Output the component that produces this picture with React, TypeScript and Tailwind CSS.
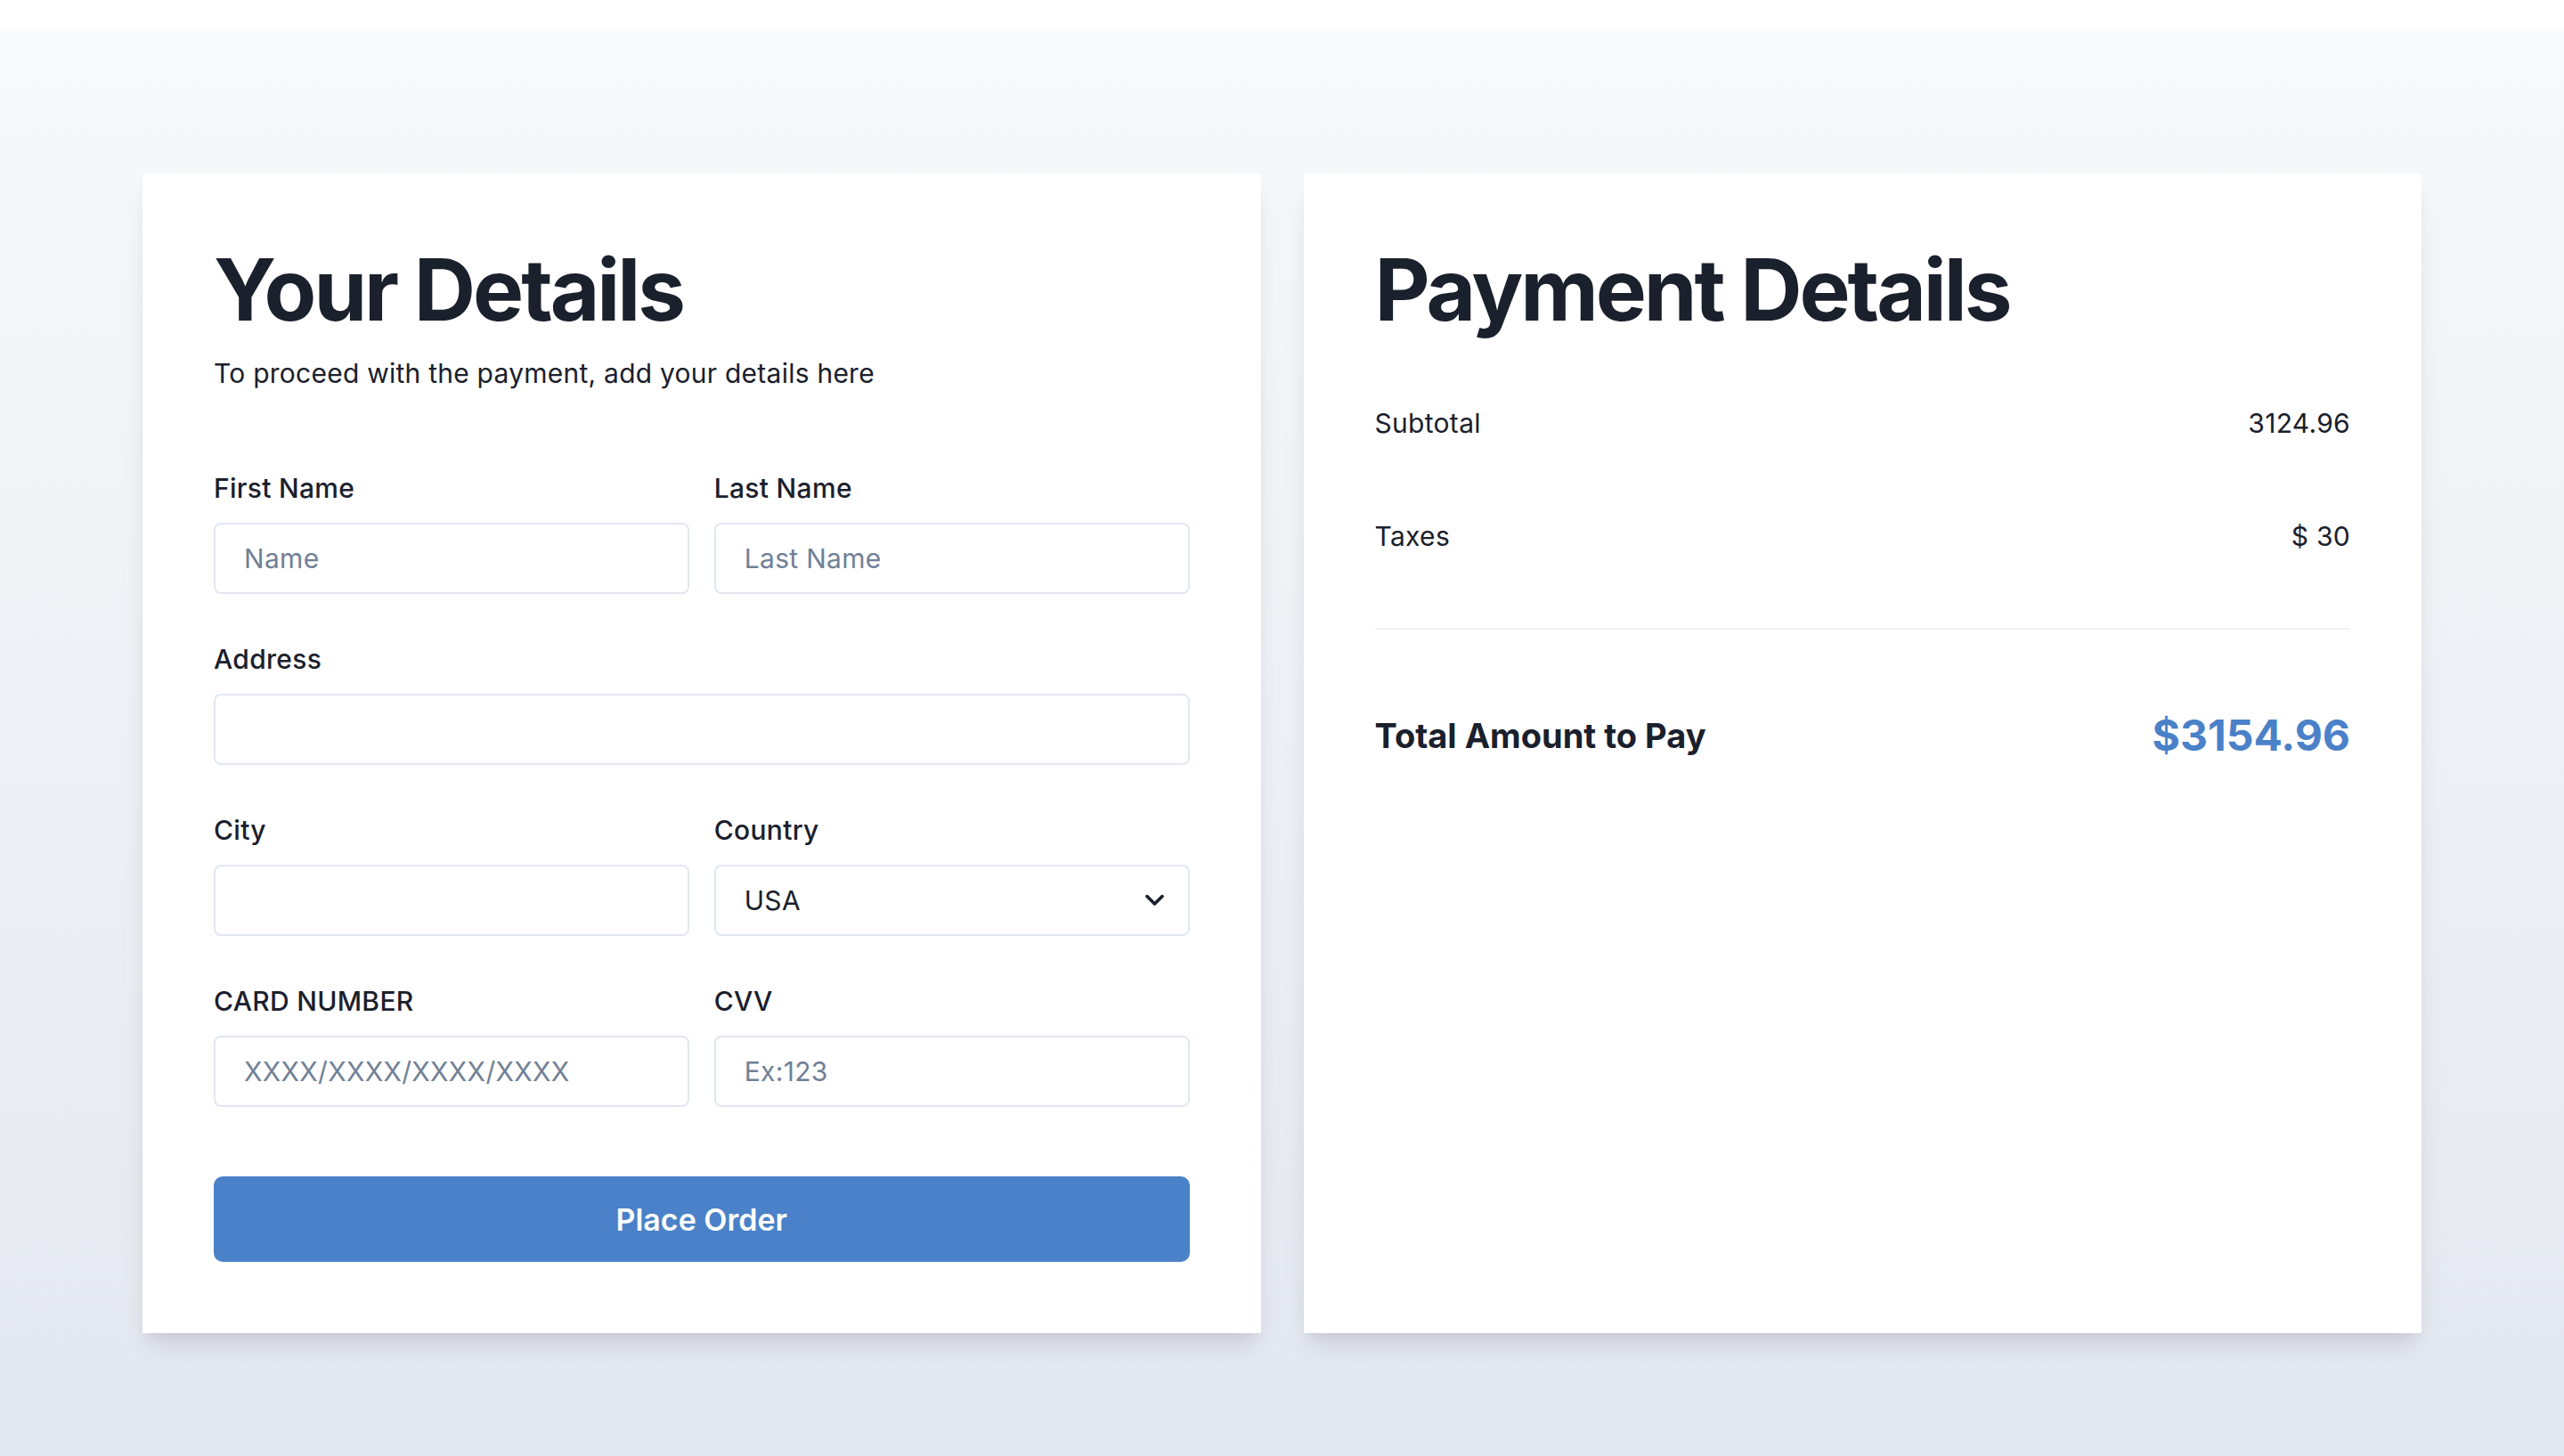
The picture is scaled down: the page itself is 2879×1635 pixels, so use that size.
import { useState } from "react";

const font = { fontFamily: "Inter, 'Noto Sans', sans-serif" };

const Field = ({ label, placeholder }: { label: string; placeholder?: string }) => (
  <div className="flex flex-col">
    <label className="text-[30px] leading-[45px] font-medium tracking-[0.01em] text-[#1a202c] mb-[16px]">{label}</label>
    <input
      placeholder={placeholder}
      className="h-[80px] w-full rounded-[8px] border-2 border-[#e2e8f0] bg-white px-[32px] text-[30px] tracking-[0.01em] text-[#1a202c] placeholder:text-[#718096] outline-none"
    />
  </div>
);

const Row = ({ label, value }: { label: string; value: string }) => (
  <div className="flex items-center justify-between text-[30px] leading-[45px] tracking-[0.01em] text-[#1a202c]">
    <span>{label}</span>
    <span>{value}</span>
  </div>
);

export default function App() {
  const [country, setCountry] = useState("USA");

  return (
    <div style={font} className="min-h-screen">
      <div className="h-[35px] bg-white" />
      <div className="bg-gradient-to-b from-[#f8f9fb] to-[#e3e7ef] px-[160px] pt-[160px] pb-[160px]">
        <div className="grid grid-cols-2 gap-[48px]">
          {/* your details */}
          <div className="bg-white px-[80px] pt-[82px] pb-[80px] shadow-[0_20px_30px_-6px_rgba(0,0,0,0.1),0_8px_12px_-4px_rgba(0,0,0,0.05)]">
            <h1 className="text-[96px] leading-none font-bold tracking-[-0.032em] text-[#1a202c]">Your Details</h1>
            <p className="mt-[24px] text-[30px] leading-[45px] tracking-[0.008em] text-[#1a202c]">
              To proceed with the payment, add your details here
            </p>

            <div className="mt-[84px] flex flex-col gap-[51px]">
              <div className="grid grid-cols-2 gap-x-[28px]">
                <Field label="First Name" placeholder="Name" />
                <Field label="Last Name" placeholder="Last Name" />
              </div>
              <Field label="Address" />
              <div className="grid grid-cols-2 gap-x-[28px]">
                <Field label="City" />
                <div className="flex flex-col">
                  <label className="text-[30px] leading-[45px] font-medium tracking-[0.01em] text-[#1a202c] mb-[16px]">Country</label>
                  <div className="relative">
                    <select
                      value={country}
                      onChange={(e) => setCountry(e.target.value)}
                      className="h-[80px] w-full appearance-none rounded-[8px] border-2 border-[#e2e8f0] bg-white px-[32px] text-[30px] tracking-[0.01em] text-[#1a202c] outline-none"
                    >
                      <option>USA</option>
                      <option>Canada</option>
                      <option>Mexico</option>
                    </select>
                    <svg
                      className="pointer-events-none absolute right-[29px] top-1/2 -translate-y-1/2"
                      width="21"
                      height="13"
                      viewBox="0 0 21 13"
                      fill="none"
                    >
                      <path d="M2 2l8.5 8.5L19 2" stroke="#1a202c" strokeWidth="3.6" strokeLinecap="round" strokeLinejoin="round" />
                    </svg>
                  </div>
                </div>
              </div>
              <div className="grid grid-cols-2 gap-x-[28px]">
                <Field label="CARD NUMBER" placeholder="XXXX/XXXX/XXXX/XXXX" />
                <Field label="CVV" placeholder="Ex:123" />
              </div>
            </div>

            <button className="mt-[78px] h-[96px] w-full rounded-[10px] bg-[#4a81c8] text-[34px] font-semibold text-white">
              Place Order
            </button>
          </div>

          {/* payment details */}
          <div className="bg-white px-[80px] pt-[82px] pb-[80px] shadow-[0_20px_30px_-6px_rgba(0,0,0,0.1),0_8px_12px_-4px_rgba(0,0,0,0.05)]">
            <h2 className="text-[96px] leading-none font-bold tracking-[-0.032em] text-[#1a202c]">Payment Details</h2>
            <div className="mt-[80px]">
              <Row label="Subtotal" value="3124.96" />
            </div>
            <div className="mt-[82px]">
              <Row label="Taxes" value="$ 30" />
            </div>
            <div className="mt-[80px] h-[2px] bg-[#edf2f7]" />
            <div className="mt-[83px] flex items-center justify-between">
              <span className="text-[38px] leading-[54px] font-bold text-[#1a202c]">Total Amount to Pay</span>
              <span className="text-[48px] leading-[72px] font-bold text-[#4a81c8]">$3154.96</span>
            </div>
          </div>
        </div>
      </div>
    </div>
  );
}
